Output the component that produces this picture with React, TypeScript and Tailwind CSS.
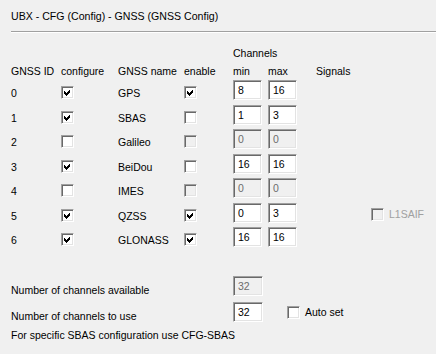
import React from "react";

const sunken =
  "border-t border-l border-t-[#a0a0a0] border-l-[#a0a0a0] border-b border-r border-b-white border-r-white shadow-[inset_1px_1px_0_#696969,inset_-1px_-1px_0_#e3e3e3]";

function Check({ checked, disabled }: { checked?: boolean; disabled?: boolean }) {
  return (
    <div
      className={`w-[13px] h-[13px] box-border relative ${sunken} ${disabled ? "bg-[#f0f0f0]" : "bg-white"}`}
    >
      {checked && (
        <svg className="absolute left-[2px] top-[2px]" width="7" height="7" viewBox="0 0 7 7">
          <path d="M0 2 L2 4 L6 0 L6 3 L2 7 L0 5 Z" fill="#000" shapeRendering="crispEdges" />
        </svg>
      )}
    </div>
  );
}

function Num({ v, disabled, w = 29 }: { v: string; disabled?: boolean; w?: number }) {
  return (
    <div
      style={{ width: w }}
      className={`h-[20px] box-border flex items-center pl-[4px] ${sunken} ${
        disabled ? "bg-[#f0f0f0] text-[#6d6d6d]" : "bg-white text-black"
      }`}
    >
      {v}
    </div>
  );
}

const rows = [
  { id: "0", cfg: true, name: "GPS", en: true, enDis: false, min: "8", max: "16", dis: false, h: 25 },
  { id: "1", cfg: true, name: "SBAS", en: false, enDis: false, min: "1", max: "3", dis: false, h: 24 },
  { id: "2", cfg: false, name: "Galileo", en: false, enDis: true, min: "0", max: "0", dis: true, h: 25 },
  { id: "3", cfg: true, name: "BeiDou", en: false, enDis: false, min: "16", max: "16", dis: false, h: 24 },
  { id: "4", cfg: false, name: "IMES", en: false, enDis: true, min: "0", max: "0", dis: true, h: 25 },
  { id: "5", cfg: true, name: "QZSS", en: true, enDis: false, min: "0", max: "3", dis: false, h: 24 },
  { id: "6", cfg: true, name: "GLONASS", en: true, enDis: false, min: "16", max: "16", dis: false, h: 24 },
];

const grid = "grid grid-cols-[50px_57px_66px_49px_35px_48px_1fr] pl-[11px]";

export default function App() {
  return (
    <div
      className="w-[436px] h-[354px] bg-[#f0f0f0] text-black text-[10.5px] leading-[13px] overflow-hidden"
      style={{ fontFamily: '"Liberation Sans", Arial, sans-serif' }}
    >
      <div className="pl-[11px] pt-[10px] h-[31px] text-[10.6px]">UBX - CFG (Config) - GNSS (GNSS Config)</div>
      <div className="ml-[11px] h-px bg-[#a0a0a0]" />
      <div className="ml-[11px] h-px bg-white" />

      <div className="h-[14px] mt-[14px] pl-[233px]">Channels</div>
      <div className={`${grid} mt-[4px] h-[14px]`}>
        <div>GNSS ID</div>
        <div>configure</div>
        <div>GNSS name</div>
        <div>enable</div>
        <div>min</div>
        <div>max</div>
        <div>Signals</div>
      </div>

      <div className="mt-[1px]">
        {rows.map((r) => (
          <div key={r.id} className={`${grid} items-start`} style={{ height: r.h }}>
            <div className="pt-[7px]">{r.id}</div>
            <div className="pt-[6px]">
              <Check checked={r.cfg} />
            </div>
            <div className="pt-[7px]">{r.name}</div>
            <div className="pt-[6px]">
              <Check checked={r.en} disabled={r.enDis} />
            </div>
            <div>
              <Num v={r.min} disabled={r.dis} />
            </div>
            <div>
              <Num v={r.max} disabled={r.dis} />
            </div>
            <div>
              {r.id === "5" && (
                <div className="flex items-center gap-[5px] pl-[55px] pt-[5px] text-[#a0a0a0]">
                  <Check disabled />
                  <span>L1SAIF</span>
                </div>
              )}
            </div>
          </div>
        ))}
      </div>

      <div className="mt-[25px] flex items-center h-[20px] pl-[11px]">
        <div className="w-[222px] pt-[9px]">Number of channels available</div>
        <Num v="32" disabled w={30} />
      </div>
      <div className="mt-[6px] flex items-center h-[20px] pl-[11px]">
        <div className="w-[222px] pt-[9px]">Number of channels to use</div>
        <Num v="32" w={30} />
        <div className="ml-[24px] flex items-center gap-[5px]">
          <Check />
          <span>Auto set</span>
        </div>
      </div>
      <div className="pl-[11px] mt-[7px]">For specific SBAS configuration use CFG-SBAS</div>
    </div>
  );
}
